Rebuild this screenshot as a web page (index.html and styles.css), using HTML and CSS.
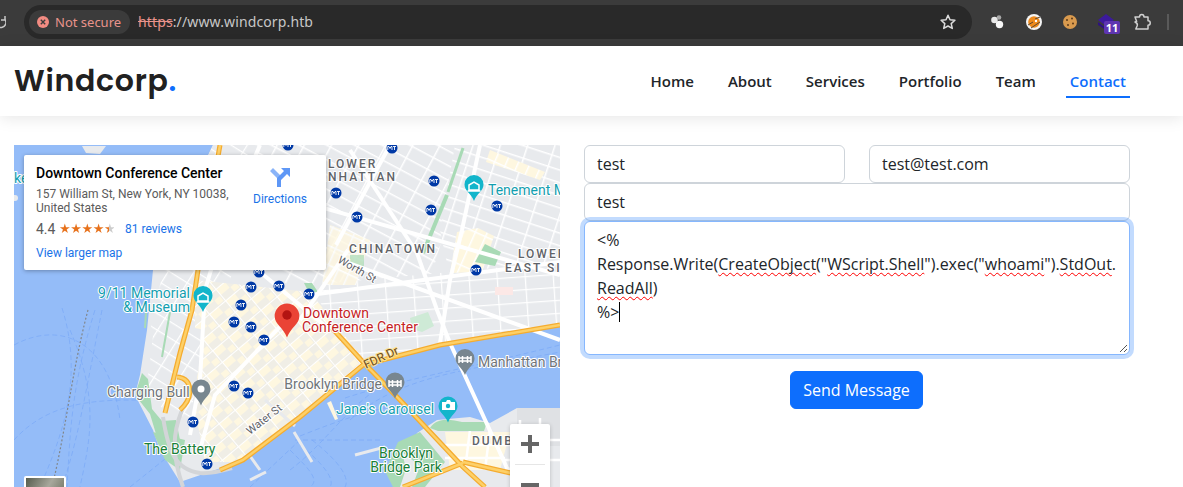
FILE: index.html
```html
<!DOCTYPE html>
<html lang="en">
<head>
<meta charset="utf-8">
<title>Windcorp</title>
<link rel="stylesheet" href="styles.css">
</head>
<body>
<div class="toolbar">
  <svg class="reload" width="6" height="16" viewBox="0 0 6 16"><path d="M-4 8a5 5 0 1 0 9 -2.500M5 2v4H1" fill="none" stroke="#c7c7c7" stroke-width="1.500"/></svg>
  <div class="omnibox">
    <div class="chip">
      <svg width="12" height="12" viewBox="0 0 12 12"><circle cx="6" cy="6" r="6" fill="#f28b82"/><path d="M3.800 3.800l4.400 4.400M8.200 3.800l-4.400 4.400" stroke="#3c3c3c" stroke-width="1.400"/></svg>
      <span>Not secure</span>
    </div>
    <div class="url"><span class="scheme">https</span>://www.windcorp.htb</div>
    <svg class="star" width="18" height="18" viewBox="0 0 18 18"><path d="M9 2.300l2 4.500 4.900.5-3.700 3.300 1.100 4.800L9 13l-4.300 2.400 1.100-4.800L2.100 7.300 7 6.800z" fill="none" stroke="#dcdcdc" stroke-width="1.500" stroke-linejoin="round"/></svg>
  </div>
  <div class="extensions">
    <svg width="18" height="18" viewBox="0 0 18 18"><circle cx="6.500" cy="7" r="3.300" fill="#e8e8e8"/><circle cx="11.500" cy="11.500" r="3.700" fill="#f7f7f7"/><circle cx="11" cy="4.500" r="2.300" fill="#a8a8a8"/></svg>
    <svg class="ext-cookie" width="18" height="18" viewBox="0 0 18 18"><circle cx="9" cy="9" r="8" fill="#f4f4f4"/><circle cx="9" cy="9" r="5.800" fill="#ee8a1c"/><path d="M3 12l5-3M10 6l5-2M6 15l9-6" stroke="#5a4632" stroke-width="1"/><circle cx="11" cy="8" r="1.200" fill="#fff"/></svg>
    <svg width="18" height="18" viewBox="0 0 18 18"><circle cx="9" cy="9" r="7" fill="#d99a4e"/><circle cx="6" cy="7" r="1" fill="#5b3a1a"/><circle cx="11" cy="5.500" r="1" fill="#5b3a1a"/><circle cx="12" cy="10.500" r="1" fill="#5b3a1a"/><circle cx="7" cy="12" r="1" fill="#5b3a1a"/></svg>
    <div class="badged">
      <svg width="18" height="18" viewBox="0 0 18 18"><path d="M9 1l8 6-8 6-8-6z" fill="#3c1a9c"/><path d="M1 9l8 6 8-6v3l-8 5-8-5z" fill="#2d1280"/></svg>
      <span class="badge">11</span>
    </div>
    <svg width="18" height="18" viewBox="0 0 18 18"><path d="M2 4h4.500c0-3.500 4.500-3.500 4.500 0H15v3.800c3 0 3 4.400 0 4.400V16H2.800l1.400-3.200c.5-1.500-.2-3-2.200-3.800l1.700-.6z" fill="none" stroke="#d0d0d0" stroke-width="1.500" stroke-linejoin="round"/></svg>
  </div>
  <div class="divider"></div>
</div>

<header class="navbar">
  <a class="logo">Windcorp<span class="logo-dot">.</span></a>
  <nav class="menu">
    <a>Home</a><a>About</a><a>Services</a><a>Portfolio</a><a>Team</a><a class="active">Contact</a>
  </nav>
</header>

<main class="contact">
  <div class="map">
    <svg class="map-canvas" width="546" height="342" viewBox="14 145 546 342">
      <defs>
        <pattern id="gridA" width="24" height="13" patternUnits="userSpaceOnUse" patternTransform="rotate(28)"><rect width="24" height="13" fill="#e8eaed"/><path d="M0 0H24M0 0V13" stroke="#fff" stroke-width="3"/></pattern>
        <pattern id="gridB" width="26" height="12" patternUnits="userSpaceOnUse" patternTransform="rotate(18)"><rect width="26" height="12" fill="#e8eaed"/><path d="M0 0H26M0 0V12" stroke="#fff" stroke-width="3"/></pattern>
        <pattern id="gridC" width="28" height="13" patternUnits="userSpaceOnUse" patternTransform="rotate(-4)"><rect width="28" height="13" fill="#e8eaed"/><path d="M0 0H28M0 0V13" stroke="#fff" stroke-width="2.500"/></pattern>
        <pattern id="gridD" width="21" height="15" patternUnits="userSpaceOnUse" patternTransform="rotate(-40)"><rect width="21" height="15" fill="#f0eee6"/><rect x="1" y="1" width="11" height="7" fill="#fef7e0"/><rect x="13" y="8" width="7" height="6" fill="#fef7e0"/><path d="M0 0H21M0 0V15" stroke="#fff" stroke-width="2"/></pattern>
        <pattern id="gridE" width="11" height="18" patternUnits="userSpaceOnUse" patternTransform="rotate(24)"><rect width="11" height="18" fill="#fef7e0"/><path d="M0 0H11M0 0V18" stroke="#fff" stroke-width="3"/></pattern>
        <pattern id="gridF" width="22" height="14" patternUnits="userSpaceOnUse" patternTransform="rotate(32)"><rect width="22" height="14" fill="#e8eaed"/><path d="M0 0H22M0 0V14" stroke="#fff" stroke-width="2.500"/></pattern>
        <clipPath id="manhattan"><path d="M213 145H560V325L450 343 363 367 300 417 243 460 215 470 180 482 160 450 153 430 135 395 140 375 147 330 153 270z"/></clipPath>
        <symbol id="mta" viewBox="0 0 12 12"><circle cx="6" cy="6" r="5.500" fill="#0039a6"/><path d="M1.800 8V4.500h1.200l1 2 1-2H6V8M7 4.500h3M8.500 4.500V8" fill="none" stroke="#fff" stroke-width=".9"/></symbol>
        <symbol id="pin" viewBox="0 0 20 26" overflow="visible"><path d="M10 0a9.500 9.500 0 0 1 9.500 9.500C19.500 16 13 18 10 26 7 18 .5 16 .5 9.500A9.500 9.500 0 0 1 10 0z"/></symbol>
        <g id="hw">
          <path d="M220 145L198 270 192 310 180 353 165 413"/>
          <path d="M177 377Q190 378 190 392 189 402 180 410"/>
          <path d="M220 470L243 460 300 417 363 365 440 345 560 325"/>
          <path d="M332 328L363 362 400 400 463 467 485 487"/>
          <path d="M463 463L403 487M463 462L515 474"/>
        </g>
      </defs>
      <rect x="14" y="145" width="546" height="342" fill="#94bcf8"/>

      <g class="ferry">
        <path d="M14 345C60 320 110 340 120 420M62 308C85 380 60 440 40 487M70 330C100 400 90 440 80 487M95 310C70 390 70 440 67 487M102 310C84 400 78 440 62 487"/>
        <path d="M14 440C50 400 100 400 140 400M130 487L170 455M250 487L300 440"/>
        <path d="M345 398C400 380 460 370 560 345M350 420C400 375 470 370 560 352M290 470C330 440 350 400 400 375"/>
        <path d="M295 440H380M300 436C340 420 370 410 400 405"/>
        <path d="M290 450C310 470 320 480 310 487M300 445C325 465 335 480 330 487M312 440C340 462 350 478 345 487"/>
      </g>
      <path class="rail" d="M88 310C72 370 66 430 52 487"/>
      <path d="M82 146h24l-6 8-14-1z" fill="#e8eaed"/>
      <circle cx="15" cy="198" r="3" fill="#e8eaed"/>

      <g clip-path="url(#manhattan)">
        <rect x="130" y="145" width="430" height="345" fill="#e8eaed"/>
        <path d="M213 145H470L430 280 310 295 200 240z" fill="url(#gridA)"/>
        <path d="M455 145H560V268L450 278 440 230z" fill="url(#gridB)"/>
        <path d="M310 285L560 262V330L440 350 360 370z" fill="url(#gridC)"/>
        <path d="M457 232L478 228 494 236 482 272 450 273z" fill="url(#gridE)"/>
        <path d="M490 150L545 172 540 180 486 162z" fill="url(#gridE)"/>
        <path d="M330 225L370 240 356 285 322 285z" fill="url(#gridE)" opacity=".8"/>
        <path d="M200 145L260 145 215 350 165 405 150 320z" fill="url(#gridF)"/>
        <path d="M195 280L310 292 368 365 300 417 240 462 205 462 195 410z" fill="url(#gridD)"/>
        <path d="M155 320L205 330 190 420 145 400z" fill="url(#gridF)"/>
        <path d="M495 287h18v8h-18z" fill="#fce8e6"/>
      </g>

      <path d="M135 395l7-22 6 6 4 30 10 12 14-1 6 30-14 6-12-22-6-20z" fill="#a8dab5"/>
      <path d="M145 328l1-15M170 312l-8 45" stroke="#a8dab5" stroke-width="2"/>
      <path d="M153 432L185 440 180 470 165 460z" fill="#a8dab5"/>
      <path d="M423 253L447 195" stroke="#a8dab5" stroke-width="4" fill="none"/>
      <path d="M448 192L463 148" stroke="#a8dab5" stroke-width="3"/>
      <path d="M475 262l10-18 16 8-6 14z" fill="#a8dab5"/>
      <path d="M410 318l18-6 6 14-12 6-10-3z" fill="#ceead6"/>
      <path d="M304 283h8l8 12-8 4z" fill="#a8dab5"/>
      <path d="M350 255h14v14h-14z" fill="#a8dab5" opacity=".7"/>
      <path d="M327 403l8 17 3-1-7-18z" fill="#fef7e0"/>

      <path d="M437 420l33-3 20 6 27-15h43v79H400l6-22 11-32z" fill="#e8eaed"/>
      <path d="M517 408h43v38h-43z" fill="#d5d8dc" opacity=".5"/>
      <path d="M445 432H510L500 470H450z" fill="#fef7e0"/>
      <path d="M445 445H510M445 458H505M470 430l-5 40M490 430l-5 40M520 420V487M540 418V487M510 440H560M505 460H560" stroke="#fff" stroke-width="2.500" fill="none"/>
      <path d="M398 442l22-10 25 30-20 25H393l-8-16z" fill="#a8dab5"/>
      <path d="M402 452l18 14-8 21h-12l6-18z" fill="#e8eaed"/>
      <path d="M430 428c8-12 22-8 32-6l25 0-3 9h-46z" fill="#a8dab5"/>

      <g class="pier"><path d="M265 400l30 26M294 432l18 30M260 470l-10-14M250 480l16-8M355 455l30-8"/></g>

      <g class="grey-road">
        <path d="M163 417C168 450 175 470 200 473 212 474 225 470 232 468"/>
        <path d="M182 410C172 435 172 455 183 487"/>
      </g>
      <g class="white-road">
        <path d="M450 343L507 468 530 487"/>
        <path d="M450 343L437 310 417 253 350 150"/>
        <path d="M260 145L220 240 205 290 200 380 190 435"/>
        <path d="M330 330L260 272M290 316L215 395 200 450"/>
        <path d="M348 250L300 320M390 145L336 245M480 145L462 230 450 280 440 343"/>
        <path d="M340 260L560 340M310 295L560 262"/>
        <path d="M225 180L560 275"/>
      </g>
      <use href="#hw" class="hw-a"/>
      <use href="#hw" class="hw-b"/>

      <g class="mta-layer">
        <use href="#mta" x="282" y="139" width="12" height="12"/><use href="#mta" x="386" y="142" width="12" height="12"/>
        <use href="#mta" x="428" y="175" width="12" height="12"/><use href="#mta" x="330" y="187" width="12" height="12"/>
        <use href="#mta" x="351" y="211" width="12" height="12"/><use href="#mta" x="425" y="204" width="12" height="12"/>
        <use href="#mta" x="491" y="200" width="12" height="12"/><use href="#mta" x="470" y="264" width="12" height="12"/>
        <use href="#mta" x="253" y="266" width="12" height="12"/><use href="#mta" x="245" y="281" width="12" height="12"/>
        <use href="#mta" x="273" y="280" width="12" height="12"/><use href="#mta" x="303" y="288" width="12" height="12"/>
        <use href="#mta" x="235" y="299" width="12" height="12"/><use href="#mta" x="228" y="316" width="12" height="12"/>
        <use href="#mta" x="245" y="321" width="12" height="12"/><use href="#mta" x="258" y="334" width="12" height="12"/>
        <use href="#mta" x="228" y="380" width="12" height="12"/><use href="#mta" x="242" y="387" width="12" height="12"/>
        <use href="#mta" x="187" y="416" width="12" height="12"/><use href="#mta" x="201" y="458" width="12" height="12"/>
      </g>

      <use href="#pin" class="pin-teal" x="193" y="286" width="20" height="26"/>
      <path d="M198 301v-5l5-3 5 3v5zM196.500 302h13" fill="none" stroke="#fff" stroke-width="1.500"/>
      <use href="#pin" class="pin-teal" x="464" y="175" width="20" height="26"/>
      <path d="M469 190v-5l5-3 5 3v5zM467.500 191h13" fill="none" stroke="#fff" stroke-width="1.500"/>
      <use href="#pin" class="pin-teal" x="438" y="396" width="20" height="27"/>
      <path d="M442 402h4l1-2h3l1 2h4v8h-13z" fill="#fff"/><circle cx="448" cy="406" r="2.200" fill="#12b5cb"/>
      <use href="#pin" class="pin-grey" x="191" y="378" width="20" height="29"/><circle cx="201" cy="389" r="3.500" fill="#fff"/>
      <use href="#pin" class="pin-grey" x="385" y="372" width="20" height="27"/>
      <path d="M389 387v-7M401 387v-7M389 382h12M389 385h12M392.500 380v7M397.500 380v7" stroke="#fff" stroke-width="1.500" fill="none"/>
      <use href="#pin" class="pin-grey" x="455" y="348" width="20" height="28"/>
      <path d="M459 363v-7M471 363v-7M459 358h12M459 361h12M462.500 356v7M467.500 356v7" stroke="#fff" stroke-width="1.500" fill="none"/>
      <use href="#pin" class="pin-red" x="274" y="302" width="26" height="37"/><circle cx="287" cy="315" r="4.700" fill="#b31412"/>

      <g class="lab district">
        <text x="328" y="168">LOWER</text>
        <text x="397" y="181" text-anchor="end">MANHATTAN</text>
        <text x="349" y="253">CHINATOWN</text>
        <text x="518" y="258">LOWER</text>
        <text x="505" y="272">EAST SIDE</text>
        <text x="472" y="445">DUMBO</text>
      </g>
      <g class="lab teal">
        <text x="488" y="195">Tenement Museum</text>
        <text x="190" y="298" text-anchor="end">9/11 Memorial</text>
        <text x="190" y="312" text-anchor="end">&amp; Museum</text>
        <text x="336" y="414">Jane's Carousel</text>
        <text x="14" y="183">ke</text>
      </g>
      <g class="lab grey">
        <text x="107" y="397">Charging Bull</text>
        <text x="382" y="389" text-anchor="end">Brooklyn Bridge</text>
        <text x="478" y="367">Manhattan Bridge</text>
      </g>
      <g class="lab green">
        <text x="144" y="454">The Battery</text>
        <text x="406" y="458" text-anchor="middle">Brooklyn</text>
        <text x="406" y="472" text-anchor="middle">Bridge Park</text>
      </g>
      <g class="lab red">
        <text x="303" y="318">Downtown</text>
        <text x="302" y="332">Conference Center</text>
      </g>
      <g class="lab street">
        <text transform="translate(337 262) rotate(30)">Worth St</text>
        <text transform="translate(250 435) rotate(-38)">Water St</text>
      </g>
      <text class="lab highway" transform="translate(366 369) rotate(-25)">FDR Dr</text>
    </svg>

    <div class="place-card">
      <div class="place-info">
        <div class="place-title">Downtown Conference Center</div>
        <div class="place-address">157 William St, New York, NY 10038, United States</div>
        <div class="place-rating"><span class="score">4.4</span><span class="stars">★★★★★</span><a class="place-link">81 reviews</a></div>
        <a class="place-link larger">View larger map</a>
      </div>
      <div class="place-directions">
        <svg width="22" height="21" viewBox="0 0 22 21"><path d="M1 4l3-3 8 8v11H8v-9z" fill="#8ab4f8"/><path d="M8 20v-9l7-7-3-3h9v9l-3-3-6 6v7z" fill="#5e97f6"/></svg>
        <a class="place-link">Directions</a>
      </div>
    </div>
    <div class="street-thumb"></div>
    <div class="zoom-control"><span class="zoom-plus"></span><span class="zoom-sep"></span><span class="zoom-minus"></span></div>
  </div>

  <form class="form">
    <div class="form-row">
      <input class="field" type="text" value="test">
      <input class="field" type="text" value="test@test.com">
    </div>
    <input class="field" type="text" value="test">
    <div class="message">
      &lt;%<br>
      Response.Write(<u>CreateObject</u>("<u>WScript.Shell</u>").exec("<u>whoami</u>").<u>StdOut</u>.<br>
      <u>ReadAll</u>)<br>
      %&gt;<span class="caret"></span>
      <svg class="grip" width="9" height="9" viewBox="0 0 9 9"><path d="M1 8l7-7M5 8l3-3" stroke="#555" stroke-width="1"/></svg>
    </div>
    <button class="send" type="button">Send Message</button>
  </form>
</main>
</body>
</html>
```
FILE: styles.css
```css
* { box-sizing: border-box; }
html, body { margin: 0; height: 487px; overflow: hidden; background: #fff; }
body { font-family: "Open Sans", sans-serif; color: #212529; }

.toolbar { height: 46px; background: #3b3b3b; display: flex; align-items: flex-start; padding: 5px 0 0 0; position: relative; }
.reload { margin-top: 9px; flex: none; width: 6px; }
.omnibox { margin-left: 18px; width: 948px; height: 34px; border-radius: 17px; background: #292929; display: flex; align-items: center; padding: 0 15px 0 5px; }
.chip { height: 24px; width: 101px; border-radius: 12px; background: #3b3b3b; display: flex; align-items: center; gap: 6px; padding-left: 8px; color: #e9938b; font: 13px "Noto Sans", sans-serif; }
.url { margin-left: 8px; font: 14px/20px "Noto Sans", sans-serif; letter-spacing: .13px; color: #c7c7c7; flex: 1; }
.scheme { color: #e9938b; text-decoration: line-through; }
.extensions { display: flex; align-items: center; height: 34px; margin-left: 16px; gap: 18px; }
.ext-cookie { margin-left: 1px; }
.badged { position: relative; width: 18px; height: 18px; }
.badged svg { display: block; }
.badge { position: absolute; left: 7px; top: 8px; width: 16px; height: 13px; border-radius: 2px; background: #5e35b1; color: #fff; font: 700 11px/13px "Noto Sans", sans-serif; text-align: center; }
.divider { width: 2px; height: 16px; background: #5a5a5a; margin: 9px 0 0 16px; }

.navbar { height: 70px; background: #fff; display: flex; align-items: flex-start; justify-content: space-between; padding: 0 53px 0 14px; box-shadow: 0 2px 15px rgba(0, 0, 0, .1); position: relative; }
.logo { font: 600 30px/70px Poppins, Inter, sans-serif; color: #212121; letter-spacing: .7px; }
.logo-dot { color: #0d6efd; }
.menu { display: flex; gap: 26px; padding-top: 21px; }
.menu a { font: 600 15px/28px "Open Sans", sans-serif; color: #212529; padding: 0 4px 3px; height: 31px; }
.menu a.active { color: #0d6efd; border-bottom: 2px solid #0d6efd; }

.contact { display: flex; gap: 24px; padding: 29px 53px 0 14px; }
.map { position: relative; width: 546px; height: 342px; overflow: hidden; flex: none; font-family: Roboto, sans-serif; }
.map-canvas { display: block; }
.ferry path { fill: none; stroke: #7baaf7; stroke-width: 1; stroke-dasharray: 5 3; opacity: .75; }
.rail { fill: none; stroke: #80868b; stroke-width: 1.200; stroke-dasharray: 2 2; }
.pier path { fill: none; stroke: #e8eaed; stroke-width: 3; }
.grey-road path { fill: none; stroke: #d3d5d8; stroke-width: 4; }
.white-road path { fill: none; stroke: #fff; stroke-width: 4; }
.hw-a { fill: none; stroke: #f5ac2f; stroke-width: 5; }
.hw-b { fill: none; stroke: #fdd068; stroke-width: 2.500; }
.pin-teal { fill: #12b5cb; }
.pin-grey { fill: #78868f; }
.pin-red { fill: #ea4335; }

.lab text, text.lab { font-family: Roboto, sans-serif; font-size: 14px; paint-order: stroke; stroke: #fff; stroke-width: 2px; stroke-linejoin: round; }
.lab.district text { font-size: 12px; font-weight: 500; letter-spacing: 2px; fill: #5f6368; }
.lab.teal text { fill: #129eaf; }
.lab.grey text { fill: #70757a; }
.lab.green text { fill: #188038; }
.lab.red text { fill: #c5221f; }
.lab.street text { font-size: 11px; fill: #5f6368; }
text.lab.highway { font-size: 12px; fill: #6d4c1f; stroke: #fde293; }

.place-card { position: absolute; left: 10px; top: 10px; width: 302px; height: 115px; background: #fff; box-shadow: 0 1px 4px rgba(0, 0, 0, .3); border-radius: 2px; display: flex; padding: 9px 12px; font-size: 12px; color: #5b5b5b; }
.place-info { width: 199px; flex: none; }
.place-title { font-size: 14px; font-weight: 500; line-height: 19px; color: #000; white-space: nowrap; }
.place-address { margin-top: 4px; line-height: 14px; }
.place-rating { display: flex; align-items: center; margin-top: 3px; height: 21px; }
.score { font-size: 14px; width: 23px; }
.stars { width: 55px; font: 13px/1 "DejaVu Sans", sans-serif; letter-spacing: -.4px; white-space: nowrap; background: linear-gradient(90deg, #e7711b 90%, #ccc 90%); -webkit-background-clip: text; background-clip: text; color: transparent; }
.place-link { color: #1a73e8; font-size: 12px; white-space: nowrap; }
.place-rating .place-link { margin-left: 11px; }
.larger { display: block; margin-top: 7px; }
.place-directions { margin-left: 15px; display: flex; flex-direction: column; align-items: center; gap: 4px; padding-top: 3px; width: 60px; }
.place-directions svg { display: block; }
.street-thumb { position: absolute; left: 10px; top: 331px; width: 42px; height: 24px; background: linear-gradient(120deg, #565c4e, #a8a89c 55%, #6d7161); border: 2px solid #fff; border-radius: 2px; }
.zoom-control { position: absolute; left: 496px; top: 279px; width: 40px; height: 80px; background: #fff; box-shadow: 0 1px 4px rgba(0, 0, 0, .2); border-radius: 2px; display: flex; flex-direction: column; align-items: center; }
.zoom-plus { display: block; width: 18px; height: 18px; margin-top: 11px; background: linear-gradient(#666, #666) center / 18px 4px no-repeat, linear-gradient(#666, #666) center / 4px 18px no-repeat; }
.zoom-sep { display: block; width: 30px; height: 1px; background: #e6e6e6; margin-top: 11px; }
.zoom-minus { display: block; width: 18px; height: 4px; margin-top: 18px; background: #666; }

.form { width: 546px; flex: none; display: flex; flex-direction: column; }
.form-row { display: flex; gap: 24px; }
.field { width: 100%; height: 38px; border: 1px solid #ced4da; border-radius: 6px; padding: 6px 12px; font: 16px/24px "Open Sans", sans-serif; color: #212529; background: #fff; min-width: 0; display: block; }
.message { position: relative; height: 134px; border: 1px solid #86b7fe; border-radius: 6px; box-shadow: 0 0 0 4px rgba(13, 110, 253, .25); padding: 6px 12px; font-size: 16px; line-height: 24px; white-space: nowrap; background: #fff; }
.message u { text-decoration: underline wavy #f00 1px; text-underline-offset: 2px; text-decoration-skip-ink: none; }
.caret { display: inline-block; width: 1px; height: 20px; background: #000; vertical-align: -4px; }
.grip { position: absolute; right: 1px; bottom: 1px; }
.send { align-self: flex-start; margin: 16px 0 0 206px; width: 133px; height: 38px; border: 1px solid #0d6efd; border-radius: 6px; background: #0d6efd; color: #fff; font: 16px/24px "Open Sans", sans-serif; padding: 0; }
```
